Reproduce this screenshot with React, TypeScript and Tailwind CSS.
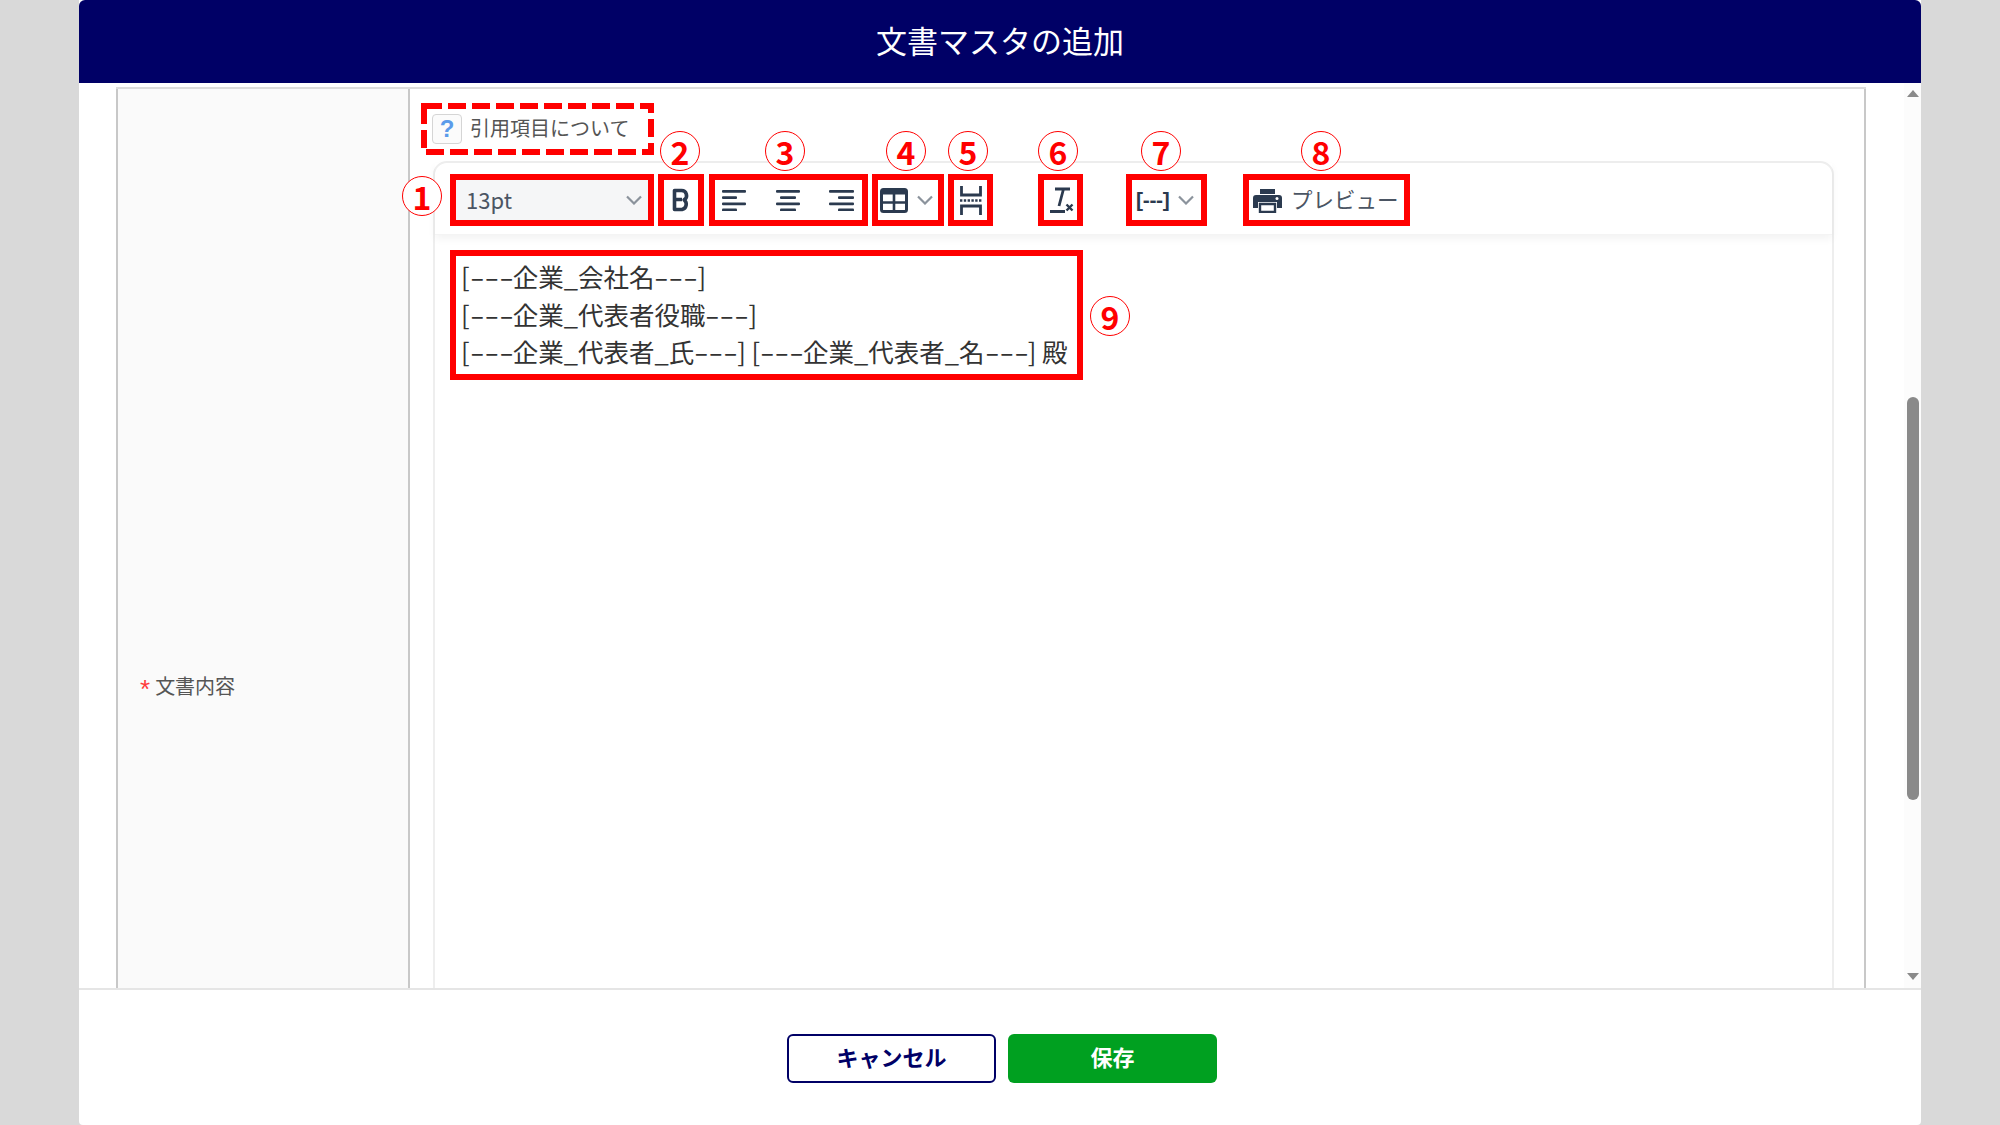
import type { ReactNode } from 'react';

const ICON = '#2b3a4f';

function Mark({ n, className }: { n: number; className: string }) {
  return (
    <div className={`absolute w-10 h-10 rounded-full border-[1.5px] border-[#f00] bg-white flex items-center justify-center text-[#f00] text-[32px] font-bold leading-none ${className}`}>
      {n}
    </div>
  );
}

function RedBox({ className, children }: { className: string; children: ReactNode }) {
  return (
    <div className={`relative h-[52px] shrink-0 border-[6px] border-[#f00] flex items-center ${className}`}>
      {children}
    </div>
  );
}

function Chevron({ className }: { className?: string }) {
  return (
    <svg width="16" height="10" viewBox="0 0 16 10" className={className}>
      <path d="M1 1.500l7 7 7-7" fill="none" stroke="#8b939c" strokeWidth="2.200" />
    </svg>
  );
}

function AlignIcon({ widths }: { widths: [number, number][] }) {
  return (
    <svg width="26" height="22" viewBox="0 0 26 22">
      {widths.map(([x, w], i) => (
        <rect key={i} x={x} y={1 + i * 6.2} width={w} height="2.800" rx="1" fill={ICON} />
      ))}
    </svg>
  );
}

// the dashes in the quoted fields are wider than the font's own
function Dashes() {
  return <span className="inline-block w-[43px] origin-left scale-x-[1.65]">---</span>;
}

function Field({ name }: { name: string }) {
  return (
    <>
      [<Dashes />{name}<Dashes />]
    </>
  );
}

function Toolbar() {
  return (
    <div className="h-[72px] pl-[15px] pt-[11px] flex items-start shadow-[0_4px_8px_rgba(0,0,0,0.05)] border-b border-[#f4f4f4]">
      <RedBox className="w-[204px]">
        <Mark n={1} className="-left-[54px] -top-[4px]" />
        <div className="w-full h-full bg-[#f5f6f7] flex items-center justify-between pl-[10px] pr-[6px] pb-[1px] text-[22px] text-[#4b5563]">
          <span>13pt</span>
          <Chevron />
        </div>
      </RedBox>

      <RedBox className="w-[46px] ml-[4px] justify-center">
        <Mark n={2} className="-left-[4px] -top-[49px]" />
        <svg width="20" height="24" viewBox="0 0 20 24">
          <path d="M3.500 2.500h7a5 5 0 0 1 2.600 9.300 5.500 5.500 0 0 1-2.100 9.700H3.500z M3.500 11.500h7.500" fill="none" stroke={ICON} strokeWidth="3.600" strokeLinejoin="round" />
        </svg>
      </RedBox>

      <RedBox className="w-[159px] ml-[5px] justify-between pl-[7px] pr-[8px]">
        <Mark n={3} className="left-[50px] -top-[49px]" />
        <AlignIcon widths={[[0, 24], [0, 15], [0, 24], [0, 15]]} />
        <AlignIcon widths={[[1, 24], [5, 16], [1, 24], [5, 16]]} />
        <AlignIcon widths={[[1, 25], [10, 16], [1, 25], [10, 16]]} />
      </RedBox>

      <RedBox className="w-[72px] ml-[4px] pl-[2px]">
        <Mark n={4} className="left-[8px] -top-[49px]" />
        <svg width="28" height="25" viewBox="0 0 28 25">
          <rect x="1.500" y="1.500" width="25" height="22" rx="2" fill="none" stroke={ICON} strokeWidth="3" />
          <rect x="1.500" y="1.500" width="25" height="5" fill={ICON} />
          <path d="M14 6v17M2 14.500h24" stroke={ICON} strokeWidth="2.600" />
        </svg>
        <Chevron className="ml-[9px]" />
      </RedBox>

      <RedBox className="w-[45px] ml-[4px] justify-center">
        <Mark n={5} className="-left-[6px] -top-[49px]" />
        <svg width="22" height="29" viewBox="0 0 22 29">
          <path d="M1.500 0v9h19V0M1.500 29v-9h19v9" fill="none" stroke={ICON} strokeWidth="2.800" />
          <path d="M0 14.500h22" stroke={ICON} strokeWidth="2.400" strokeDasharray="2.400 1.400" />
        </svg>
      </RedBox>

      <RedBox className="w-[45px] ml-[45px] pl-[5px]">
        <Mark n={6} className="-left-[6px] -top-[49px]" />
        <svg width="25" height="26" viewBox="0 0 25 26">
          <path d="M6 2h15M14.500 2 10 19M1 24.500h15" fill="none" stroke={ICON} strokeWidth="2.800" />
          <path d="M17.500 17.500l6 6M23.500 17.500l-6 6" fill="none" stroke={ICON} strokeWidth="2.400" />
        </svg>
      </RedBox>

      <RedBox className="w-[81px] ml-[43px] pl-[4px]">
        <Mark n={7} className="left-[9px] -top-[49px]" />
        <span className="text-[21px] font-bold tracking-[-0.3px] text-[#2b3a4f] font-['Liberation_Sans',sans-serif]">[---]</span>
        <Chevron className="ml-[9px]" />
      </RedBox>

      <RedBox className="w-[167px] ml-[36px] pl-[4px]">
        <Mark n={8} className="left-[52px] -top-[49px]" />
        <svg width="29" height="25" viewBox="0 0 29 25">
          <path d="M7 1h15v5H7z" fill={ICON} />
          <path d="M3 7h23a3 3 0 0 1 3 3v10h-5v-6H5v6H0V10a3 3 0 0 1 3-3z" fill={ICON} />
          <path d="M7 16h15v8H7z" fill="none" stroke={ICON} strokeWidth="2.400" />
          <circle cx="24" cy="10.500" r="1.500" fill="#fff" />
        </svg>
        <span className="ml-[9px] pb-[2px] text-[21.500px] text-[#4b5563] whitespace-nowrap">プレビュー</span>
      </RedBox>
    </div>
  );
}

export default function App() {
  return (
    <div className="w-[2000px] h-[1125px] bg-[#d9d9d9] flex justify-center overflow-hidden font-['Noto_Sans_CJK_JP','Noto_Sans',sans-serif]">
      <div className="w-[1842px] h-full bg-white rounded-b-sm flex flex-col">
        <div className="h-[83px] shrink-0 bg-[#000066] rounded-t-md flex items-center justify-center pb-[2px] text-white text-[31px]">
          文書マスタの追加
        </div>

        <div className="flex-1 min-h-0 flex overflow-hidden">
          <div className="flex-1 min-w-0 pl-[37px] pr-[38px] pt-1">
            <div className="h-[1196px] flex border-t-2 border-[#dcdcdc]">
              <div className="w-[294px] shrink-0 bg-[#fafafa] border-l-2 border-r-2 border-[#c8c8c8] flex items-center pl-[22px] text-[20px] text-[#555]">
                <span className="text-[#ff3b3b] text-[26px] leading-none mr-[5px] pt-[6px] font-['Liberation_Sans',sans-serif]">*</span>
                文書内容
              </div>
              <div className="flex-1 min-w-0 border-r-2 border-[#c8c8c8] pl-[23px] pr-[30px]">
                <div className="relative -ml-[12px] mt-[14px] mb-[6px] w-[233px] h-[52px] flex items-center pl-[11px] text-[20px] text-[#555]">
                  <svg width="233" height="52" className="absolute left-0 top-0">
                    <rect x="3" y="3" width="227" height="46" fill="none" stroke="#f00" strokeWidth="6" strokeDasharray="18 6" />
                  </svg>
                  <span className="w-[30px] h-[30px] mr-[8px] border border-[#d5d5d5] rounded-[4px] bg-[#fbfbfb] flex items-center justify-center text-[#5b9bea] text-[24px] font-bold font-['Liberation_Sans',sans-serif]">?</span>
                  <span className="pb-[2px]">引用項目について</span>
                </div>
                <div className="h-[1100px] border-2 border-[#eee] rounded-t-[14px] bg-white">
                  <Toolbar />
                  <div className="relative ml-[15px] mt-[15px] w-[633px] h-[130px] border-[6px] border-[#f00] pl-[5px] pt-[1px] text-[25.500px] leading-[37.500px] text-[#333] whitespace-nowrap">
                    <Mark n={9} className="left-full ml-[13px] top-[40px]" />
                    <div><Field name="企業_会社名" /></div>
                    <div><Field name="企業_代表者役職" /></div>
                    <div><Field name="企業_代表者_氏" /> <Field name="企業_代表者_名" /> 殿</div>
                  </div>
                </div>
              </div>
            </div>
          </div>

          <div className="w-[17px] shrink-0 bg-[#fcfcfc] flex flex-col items-center relative">
            <div className="mt-[7px] w-0 h-0 border-l-[6px] border-r-[6px] border-b-[7px] border-l-transparent border-r-transparent border-b-[#8a8a8a]" />
            <div className="absolute left-[3px] top-[314px] w-[12px] h-[403px] rounded-full bg-[#8a8a8a]" />
            <div className="mt-auto mb-[8px] w-0 h-0 border-l-[6px] border-r-[6px] border-t-[7px] border-l-transparent border-r-transparent border-t-[#8a8a8a]" />
          </div>
        </div>

        <div className="h-[137px] shrink-0 border-t-2 border-[#e5e5e5] pt-[44px] pl-[4px] flex justify-center gap-[12px]">
          <button className="w-[209px] h-[49px] pb-[4px] rounded-md border-2 border-[#000066] bg-white text-[#000066] text-[22px] font-bold">キャンセル</button>
          <button className="w-[209px] h-[49px] pb-[4px] rounded-md bg-[#00a020] text-white text-[22px] font-bold">保存</button>
        </div>
      </div>
    </div>
  );
}
